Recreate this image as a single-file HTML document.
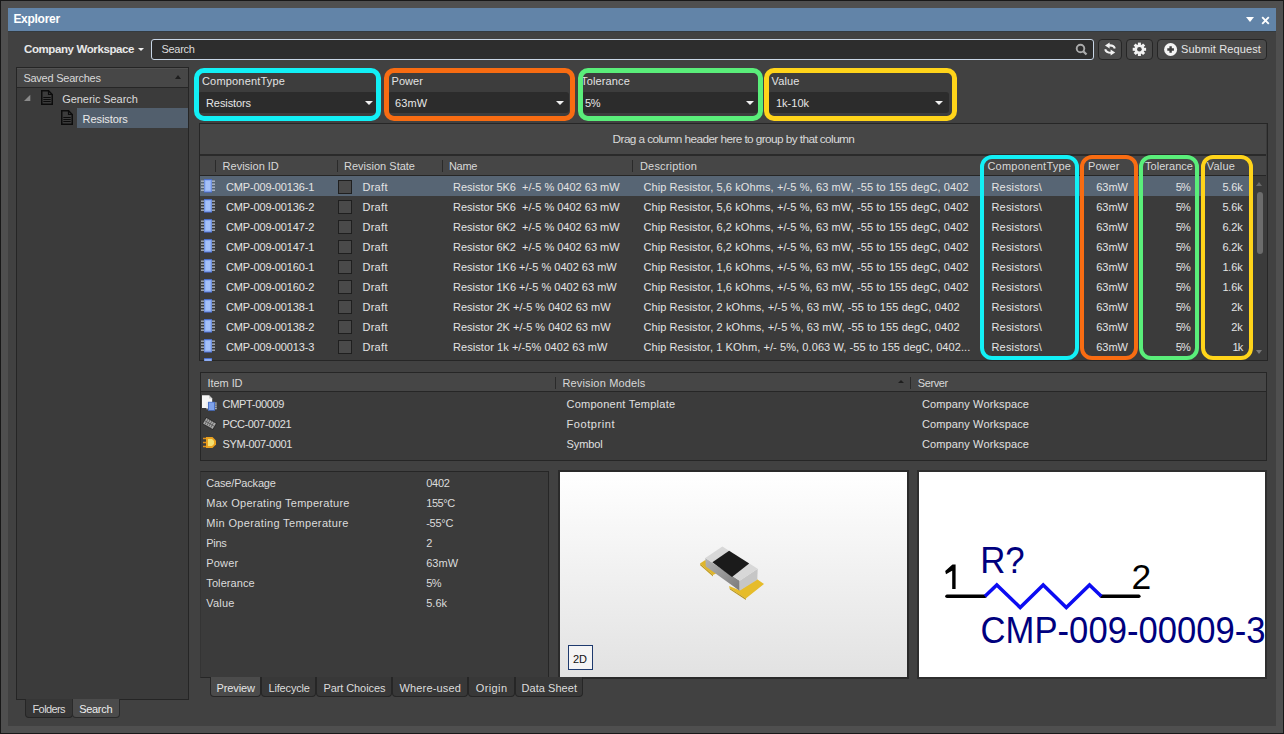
<!DOCTYPE html>
<html><head><meta charset="utf-8">
<style>
*{box-sizing:border-box;margin:0;padding:0}
html,body{width:1284px;height:734px;overflow:hidden;background:#181818}
body{position:relative;font-family:"Liberation Sans",sans-serif;font-size:11px;color:#dedede}
.a{position:absolute}
.t{position:absolute;white-space:pre;line-height:0}
.btn{position:absolute;background:#4a4a4a;border:1.5px solid #262626;border-radius:4px}
.hl{position:absolute;border-radius:10px;border:5px solid}
.dd{position:absolute;background:#2c2c2c;border-radius:3px}
.tri{position:absolute;width:0;height:0;border-left:4px solid transparent;border-right:4px solid transparent;border-top:4px solid #f0f0f0}
svg{position:absolute}
</style></head><body>

<div class="a" style="left:1px;top:1px;width:1282px;height:732px;background:#4f4f4f"></div>
<div class="a" style="left:8px;top:8px;width:1268px;height:718px;background:#414141"></div>
<div class="a" style="left:8px;top:8px;width:1268px;height:23px;background:#6284a8"></div>
<div class="a" style="left:8px;top:31px;width:1268px;height:1px;background:#343b40"></div>
<div class="t" style="top:19.00px;font-size:12px;color:#ffffff;font-weight:bold;letter-spacing:-0.286px;left:13.4px;">Explorer</div>
<div class="a" style="left:1245.5px;top:17px;width:0;height:0;border-left:4px solid transparent;border-right:4px solid transparent;border-top:5px solid #fff"></div>
<svg style="left:1261px;top:16px" width="9" height="9"><path d="M1.2 1.2L7.8 7.8M7.8 1.2L1.2 7.8" stroke="#fff" stroke-width="1.9"/></svg>
<div class="t" style="top:49.00px;font-size:11.5px;color:#e8e8e8;font-weight:bold;letter-spacing:-0.396px;left:24px;">Company Workspace</div>
<div class="a" style="left:137.5px;top:47.5px;width:0;height:0;border-left:3px solid transparent;border-right:3px solid transparent;border-top:3.5px solid #f0f0f0"></div>
<div class="a" style="left:151px;top:39px;width:943px;height:21px;background:#2d2d2d;border:1.3px solid #c8d6e6;border-radius:3px"></div>
<div class="t" style="top:49.00px;font-size:11px;color:#dcdcdc;letter-spacing:-0.259px;left:161.4px;">Search</div>
<svg style="left:1075px;top:43px" width="13" height="13"><circle cx="5.5" cy="5.5" r="3.8" stroke="#ababab" stroke-width="1.9" fill="none"/><path d="M8.3 8.3L11.5 11.5" stroke="#ababab" stroke-width="2.3"/></svg>
<div class="btn" style="left:1098px;top:39px;width:24px;height:21px"></div>
<svg style="left:1103px;top:42px" width="14" height="15"><path d="M2 3.6L6.6 0.6V6.6Z" fill="#f0f0f0"/><path d="M6 3.4C9 3.2 11.2 4.2 11.8 6.6" stroke="#f0f0f0" stroke-width="2.1" fill="none"/><path d="M12.2 10.6L7.6 7.6V13.6Z" fill="#f0f0f0"/><path d="M2.2 7.2C2.8 9.6 5 10.8 8 10.8" stroke="#f0f0f0" stroke-width="2.1" fill="none"/></svg>
<div class="btn" style="left:1126px;top:39px;width:27px;height:21px"></div>
<svg style="left:1132px;top:42px" width="15" height="15" viewBox="0 0 15 15"><g fill="#f2f2f2"><circle cx="7.4" cy="7.3" r="4.9"/><rect x="5.9" y="0.6" width="3" height="3.4" transform="rotate(0 7.4 7.3)"/><rect x="5.9" y="0.6" width="3" height="3.4" transform="rotate(45 7.4 7.3)"/><rect x="5.9" y="0.6" width="3" height="3.4" transform="rotate(90 7.4 7.3)"/><rect x="5.9" y="0.6" width="3" height="3.4" transform="rotate(135 7.4 7.3)"/><rect x="5.9" y="0.6" width="3" height="3.4" transform="rotate(180 7.4 7.3)"/><rect x="5.9" y="0.6" width="3" height="3.4" transform="rotate(225 7.4 7.3)"/><rect x="5.9" y="0.6" width="3" height="3.4" transform="rotate(270 7.4 7.3)"/><rect x="5.9" y="0.6" width="3" height="3.4" transform="rotate(315 7.4 7.3)"/></g><circle cx="7.4" cy="7.3" r="2.3" fill="#4a4a4a"/></svg>
<div class="btn" style="left:1157px;top:39px;width:110px;height:21px"></div>
<svg style="left:1164px;top:43px" width="14" height="14"><circle cx="6.6" cy="6.5" r="6.5" fill="#f4f4f4"/><path d="M6.6 3.2V9.8M3.3 6.5H9.9" stroke="#3e3e3e" stroke-width="2.4"/></svg>
<div class="t" style="top:49.00px;font-size:11px;color:#e6e6e6;letter-spacing:0.124px;left:1181px;">Submit Request</div>
<div class="a" style="left:16px;top:67px;width:173px;height:633px;background:#3b3b3b;border:1px solid #252525"></div>
<div class="a" style="left:17px;top:68px;width:171px;height:20px;background:#474747;border-top:1px solid #525252;border-bottom:1px solid #262626"></div>
<div class="t" style="top:78.00px;font-size:11px;color:#d8d8d8;letter-spacing:-0.244px;left:23.4px;">Saved Searches</div>
<div class="a" style="left:174.5px;top:75px;width:0;height:0;border-left:3.5px solid transparent;border-right:3.5px solid transparent;border-bottom:4px solid #1e1e1e"></div>
<svg style="left:23px;top:94px" width="8" height="8"><path d="M7.3 0.8L7.3 7L1 7Z" fill="#8a8a8a"/></svg>
<svg style="left:41px;top:90px" width="12" height="15"><path d="M0.75 0.75H7.5L11.25 4.5V14.25H0.75Z" fill="none" stroke="#0c0c0c" stroke-width="1.5"/><path d="M7.5 0.75V4.5H11.25" fill="none" stroke="#0c0c0c" stroke-width="1.2"/><path d="M2.3 7.5H9.7M2.3 9.5H9.7M2.3 11.5H9.7" stroke="#0c0c0c" stroke-width="1.1"/></svg>
<div class="t" style="top:99.00px;font-size:11px;color:#dadada;letter-spacing:-0.073px;left:62.3px;">Generic Search</div>
<div class="a" style="left:77px;top:108px;width:111px;height:20px;background:#525f6d"></div>
<svg style="left:61px;top:110px" width="12" height="15"><path d="M0.75 0.75H7.5L11.25 4.5V14.25H0.75Z" fill="none" stroke="#0c0c0c" stroke-width="1.5"/><path d="M7.5 0.75V4.5H11.25" fill="none" stroke="#0c0c0c" stroke-width="1.2"/><path d="M2.3 7.5H9.7M2.3 9.5H9.7M2.3 11.5H9.7" stroke="#0c0c0c" stroke-width="1.1"/></svg>
<div class="t" style="top:119.00px;font-size:11px;color:#eaeaea;letter-spacing:-0.071px;left:82.6px;">Resistors</div>
<div class="a" style="left:25px;top:699px;width:48px;height:19px;background:#363636;border:1px solid #262626;border-top:none;border-radius:0 0 4px 4px"></div>
<div class="a" style="left:72px;top:699px;width:48px;height:19px;background:#4b4b4b;border:1px solid #2a2a2a;border-top:none;border-radius:0 0 4px 4px"></div>
<div class="t" style="top:709.00px;font-size:11px;color:#dcdcdc;letter-spacing:-0.597px;left:32.5px;">Folders</div>
<div class="t" style="top:709.00px;font-size:11px;color:#eeeeee;letter-spacing:-0.309px;left:79.2px;">Search</div>
<div class="a" style="left:198px;top:72px;width:179px;height:45px;background:#3d3d3d"></div>
<div class="dd" style="left:198px;top:92px;width:179px;height:21px"></div>
<div class="t" style="top:81.00px;font-size:11px;color:#e2e2e2;letter-spacing:0.176px;left:202px;">ComponentType</div>
<div class="t" style="top:103.00px;font-size:11px;color:#e6e6e6;letter-spacing:-0.093px;left:206px;">Resistors</div>
<div class="tri" style="left:365px;top:100.5px"></div>
<div class="a" style="left:388px;top:72px;width:183px;height:45px;background:#3d3d3d"></div>
<div class="dd" style="left:388px;top:92px;width:181px;height:21px"></div>
<div class="t" style="top:81.00px;font-size:11px;color:#e2e2e2;letter-spacing:0.064px;left:391.5px;">Power</div>
<div class="t" style="top:103.00px;font-size:11px;color:#e6e6e6;letter-spacing:0.155px;left:395px;">63mW</div>
<div class="tri" style="left:555.5px;top:100.5px"></div>
<div class="a" style="left:582px;top:72px;width:177px;height:45px;background:#3d3d3d"></div>
<div class="dd" style="left:582px;top:92px;width:177px;height:21px"></div>
<div class="t" style="top:81.00px;font-size:11px;color:#e2e2e2;letter-spacing:0.145px;left:581px;">Tolerance</div>
<div class="t" style="top:103.00px;font-size:11px;color:#e6e6e6;letter-spacing:-0.299px;left:585px;">5%</div>
<div class="tri" style="left:745.5px;top:100.5px"></div>
<div class="a" style="left:768px;top:72px;width:185px;height:45px;background:#3d3d3d"></div>
<div class="dd" style="left:768px;top:92px;width:181px;height:21px"></div>
<div class="t" style="top:81.00px;font-size:11px;color:#e2e2e2;letter-spacing:0.137px;left:771.6px;">Value</div>
<div class="t" style="top:103.00px;font-size:11px;color:#e6e6e6;letter-spacing:-0.002px;left:776px;">1k-10k</div>
<div class="tri" style="left:935px;top:100.5px"></div>
<div class="a" style="left:199px;top:123px;width:1069px;height:238px;background:#3b3b3b;border:1px solid #262626"></div>
<div class="a" style="left:200px;top:124px;width:1066px;height:31px;background:#464646;border-bottom:1px solid #2a2a2a"></div>
<div class="t" style="top:139.00px;font-size:11.8px;color:#dadada;letter-spacing:-0.580px;left:612.6px;">Drag a column header here to group by that column</div>
<div class="a" style="left:200px;top:155px;width:1066px;height:21px;background:#464646;border-top:1px solid #2a2a2a;border-bottom:1px solid #262626"></div>
<div class="a" style="left:215px;top:160px;width:1px;height:12px;background:#2a2a2a"></div>
<div class="a" style="left:337px;top:160px;width:1px;height:12px;background:#2a2a2a"></div>
<div class="a" style="left:442px;top:160px;width:1px;height:12px;background:#2a2a2a"></div>
<div class="a" style="left:632px;top:160px;width:1px;height:12px;background:#2a2a2a"></div>
<div class="t" style="top:166.00px;font-size:11px;color:#d8d8d8;letter-spacing:-0.004px;left:222.6px;">Revision ID</div>
<div class="t" style="top:166.00px;font-size:11px;color:#d8d8d8;letter-spacing:0.005px;left:344px;">Revision State</div>
<div class="t" style="top:166.00px;font-size:11px;color:#d8d8d8;letter-spacing:-0.335px;left:449px;">Name</div>
<div class="t" style="top:166.00px;font-size:11px;color:#d8d8d8;letter-spacing:0.180px;left:640px;">Description</div>
<div class="t" style="top:166.00px;font-size:11px;color:#d8d8d8;letter-spacing:0.237px;left:987.4px;">ComponentType</div>
<div class="t" style="top:166.00px;font-size:11px;color:#d8d8d8;letter-spacing:0.064px;left:1088px;">Power</div>
<div class="t" style="top:166.00px;font-size:11px;color:#d8d8d8;letter-spacing:0.034px;left:1145px;">Tolerance</div>
<div class="t" style="top:166.00px;font-size:11px;color:#d8d8d8;letter-spacing:0.237px;left:1206.7px;">Value</div>
<div class="a" style="left:200px;top:176px;width:1053px;height:185px;overflow:hidden">
<div class="a" style="left:0px;top:0px;width:1053px;height:20px;background:#576574"></div>
</div>
<svg style="left:201px;top:179.4px" width="14" height="14"><rect x="0" y="1.6" width="3" height="1.1" fill="#c4cede"/><rect x="11" y="1.6" width="3" height="1.1" fill="#c4cede"/><rect x="0" y="4.6" width="3" height="1.1" fill="#c4cede"/><rect x="11" y="4.6" width="3" height="1.1" fill="#c4cede"/><rect x="0" y="7.6" width="3" height="1.1" fill="#c4cede"/><rect x="11" y="7.6" width="3" height="1.1" fill="#c4cede"/><rect x="0" y="10.6" width="3" height="1.1" fill="#c4cede"/><rect x="11" y="10.6" width="3" height="1.1" fill="#c4cede"/><rect x="3" y="0" width="8" height="13.6" fill="#4668c8"/><rect x="3.4" y="0.9" width="7.2" height="11.8" fill="#8cacf2"/><rect x="4.6" y="2" width="4.5" height="9.5" fill="#a4c0f8"/></svg>
<div class="t" style="top:187.00px;font-size:11px;color:#e4e4e4;letter-spacing:-0.159px;left:226px;">CMP-009-00136-1</div>
<div class="a" style="left:338px;top:180px;width:14px;height:14px;background:#4a4a4a;border:1px solid #1f1f1f"></div>
<div class="t" style="top:187.00px;font-size:11px;color:#e4e4e4;letter-spacing:0.313px;left:362.4px;">Draft</div>
<div class="t" style="top:187.00px;font-size:11px;color:#e4e4e4;letter-spacing:0.000px;left:453px;">Resistor 5K6  +/-5 % 0402 63 mW</div>
<div class="t" style="top:187.00px;font-size:11px;color:#e4e4e4;letter-spacing:0.103px;left:643.4px;">Chip Resistor, 5,6 kOhms, +/-5 %, 63 mW, -55 to 155 degC, 0402</div>
<div class="t" style="top:187.00px;font-size:11px;color:#e4e4e4;letter-spacing:0.160px;left:991.5px;">Resistors\</div>
<div class="t" style="top:187.00px;font-size:11px;color:#e4e4e4;letter-spacing:-0.070px;left:1096.30px;">63mW</div>
<div class="t" style="top:187.00px;font-size:11px;color:#e4e4e4;letter-spacing:-0.749px;left:1175.70px;">5%</div>
<div class="t" style="top:187.00px;font-size:11px;color:#e4e4e4;letter-spacing:-0.148px;left:1222.40px;">5.6k</div>
<svg style="left:201px;top:199.4px" width="14" height="14"><rect x="0" y="1.6" width="3" height="1.1" fill="#c4cede"/><rect x="11" y="1.6" width="3" height="1.1" fill="#c4cede"/><rect x="0" y="4.6" width="3" height="1.1" fill="#c4cede"/><rect x="11" y="4.6" width="3" height="1.1" fill="#c4cede"/><rect x="0" y="7.6" width="3" height="1.1" fill="#c4cede"/><rect x="11" y="7.6" width="3" height="1.1" fill="#c4cede"/><rect x="0" y="10.6" width="3" height="1.1" fill="#c4cede"/><rect x="11" y="10.6" width="3" height="1.1" fill="#c4cede"/><rect x="3" y="0" width="8" height="13.6" fill="#4668c8"/><rect x="3.4" y="0.9" width="7.2" height="11.8" fill="#8cacf2"/><rect x="4.6" y="2" width="4.5" height="9.5" fill="#a4c0f8"/></svg>
<div class="t" style="top:207.00px;font-size:11px;color:#e4e4e4;letter-spacing:-0.159px;left:226px;">CMP-009-00136-2</div>
<div class="a" style="left:338px;top:200px;width:14px;height:14px;background:#4a4a4a;border:1px solid #1f1f1f"></div>
<div class="t" style="top:207.00px;font-size:11px;color:#e4e4e4;letter-spacing:0.313px;left:362.4px;">Draft</div>
<div class="t" style="top:207.00px;font-size:11px;color:#e4e4e4;letter-spacing:0.000px;left:453px;">Resistor 5K6  +/-5 % 0402 63 mW</div>
<div class="t" style="top:207.00px;font-size:11px;color:#e4e4e4;letter-spacing:0.103px;left:643.4px;">Chip Resistor, 5,6 kOhms, +/-5 %, 63 mW, -55 to 155 degC, 0402</div>
<div class="t" style="top:207.00px;font-size:11px;color:#e4e4e4;letter-spacing:0.160px;left:991.5px;">Resistors\</div>
<div class="t" style="top:207.00px;font-size:11px;color:#e4e4e4;letter-spacing:-0.070px;left:1096.30px;">63mW</div>
<div class="t" style="top:207.00px;font-size:11px;color:#e4e4e4;letter-spacing:-0.749px;left:1175.70px;">5%</div>
<div class="t" style="top:207.00px;font-size:11px;color:#e4e4e4;letter-spacing:-0.148px;left:1222.40px;">5.6k</div>
<svg style="left:201px;top:219.4px" width="14" height="14"><rect x="0" y="1.6" width="3" height="1.1" fill="#c4cede"/><rect x="11" y="1.6" width="3" height="1.1" fill="#c4cede"/><rect x="0" y="4.6" width="3" height="1.1" fill="#c4cede"/><rect x="11" y="4.6" width="3" height="1.1" fill="#c4cede"/><rect x="0" y="7.6" width="3" height="1.1" fill="#c4cede"/><rect x="11" y="7.6" width="3" height="1.1" fill="#c4cede"/><rect x="0" y="10.6" width="3" height="1.1" fill="#c4cede"/><rect x="11" y="10.6" width="3" height="1.1" fill="#c4cede"/><rect x="3" y="0" width="8" height="13.6" fill="#4668c8"/><rect x="3.4" y="0.9" width="7.2" height="11.8" fill="#8cacf2"/><rect x="4.6" y="2" width="4.5" height="9.5" fill="#a4c0f8"/></svg>
<div class="t" style="top:227.00px;font-size:11px;color:#e4e4e4;letter-spacing:-0.159px;left:226px;">CMP-009-00147-2</div>
<div class="a" style="left:338px;top:220px;width:14px;height:14px;background:#4a4a4a;border:1px solid #1f1f1f"></div>
<div class="t" style="top:227.00px;font-size:11px;color:#e4e4e4;letter-spacing:0.313px;left:362.4px;">Draft</div>
<div class="t" style="top:227.00px;font-size:11px;color:#e4e4e4;letter-spacing:0.000px;left:453px;">Resistor 6K2  +/-5 % 0402 63 mW</div>
<div class="t" style="top:227.00px;font-size:11px;color:#e4e4e4;letter-spacing:0.103px;left:643.4px;">Chip Resistor, 6,2 kOhms, +/-5 %, 63 mW, -55 to 155 degC, 0402</div>
<div class="t" style="top:227.00px;font-size:11px;color:#e4e4e4;letter-spacing:0.160px;left:991.5px;">Resistors\</div>
<div class="t" style="top:227.00px;font-size:11px;color:#e4e4e4;letter-spacing:-0.070px;left:1096.30px;">63mW</div>
<div class="t" style="top:227.00px;font-size:11px;color:#e4e4e4;letter-spacing:-0.749px;left:1175.70px;">5%</div>
<div class="t" style="top:227.00px;font-size:11px;color:#e4e4e4;letter-spacing:-0.148px;left:1222.40px;">6.2k</div>
<svg style="left:201px;top:239.4px" width="14" height="14"><rect x="0" y="1.6" width="3" height="1.1" fill="#c4cede"/><rect x="11" y="1.6" width="3" height="1.1" fill="#c4cede"/><rect x="0" y="4.6" width="3" height="1.1" fill="#c4cede"/><rect x="11" y="4.6" width="3" height="1.1" fill="#c4cede"/><rect x="0" y="7.6" width="3" height="1.1" fill="#c4cede"/><rect x="11" y="7.6" width="3" height="1.1" fill="#c4cede"/><rect x="0" y="10.6" width="3" height="1.1" fill="#c4cede"/><rect x="11" y="10.6" width="3" height="1.1" fill="#c4cede"/><rect x="3" y="0" width="8" height="13.6" fill="#4668c8"/><rect x="3.4" y="0.9" width="7.2" height="11.8" fill="#8cacf2"/><rect x="4.6" y="2" width="4.5" height="9.5" fill="#a4c0f8"/></svg>
<div class="t" style="top:247.00px;font-size:11px;color:#e4e4e4;letter-spacing:-0.159px;left:226px;">CMP-009-00147-1</div>
<div class="a" style="left:338px;top:240px;width:14px;height:14px;background:#4a4a4a;border:1px solid #1f1f1f"></div>
<div class="t" style="top:247.00px;font-size:11px;color:#e4e4e4;letter-spacing:0.313px;left:362.4px;">Draft</div>
<div class="t" style="top:247.00px;font-size:11px;color:#e4e4e4;letter-spacing:0.000px;left:453px;">Resistor 6K2  +/-5 % 0402 63 mW</div>
<div class="t" style="top:247.00px;font-size:11px;color:#e4e4e4;letter-spacing:0.103px;left:643.4px;">Chip Resistor, 6,2 kOhms, +/-5 %, 63 mW, -55 to 155 degC, 0402</div>
<div class="t" style="top:247.00px;font-size:11px;color:#e4e4e4;letter-spacing:0.160px;left:991.5px;">Resistors\</div>
<div class="t" style="top:247.00px;font-size:11px;color:#e4e4e4;letter-spacing:-0.070px;left:1096.30px;">63mW</div>
<div class="t" style="top:247.00px;font-size:11px;color:#e4e4e4;letter-spacing:-0.749px;left:1175.70px;">5%</div>
<div class="t" style="top:247.00px;font-size:11px;color:#e4e4e4;letter-spacing:-0.148px;left:1222.40px;">6.2k</div>
<svg style="left:201px;top:259.4px" width="14" height="14"><rect x="0" y="1.6" width="3" height="1.1" fill="#c4cede"/><rect x="11" y="1.6" width="3" height="1.1" fill="#c4cede"/><rect x="0" y="4.6" width="3" height="1.1" fill="#c4cede"/><rect x="11" y="4.6" width="3" height="1.1" fill="#c4cede"/><rect x="0" y="7.6" width="3" height="1.1" fill="#c4cede"/><rect x="11" y="7.6" width="3" height="1.1" fill="#c4cede"/><rect x="0" y="10.6" width="3" height="1.1" fill="#c4cede"/><rect x="11" y="10.6" width="3" height="1.1" fill="#c4cede"/><rect x="3" y="0" width="8" height="13.6" fill="#4668c8"/><rect x="3.4" y="0.9" width="7.2" height="11.8" fill="#8cacf2"/><rect x="4.6" y="2" width="4.5" height="9.5" fill="#a4c0f8"/></svg>
<div class="t" style="top:267.00px;font-size:11px;color:#e4e4e4;letter-spacing:-0.159px;left:226px;">CMP-009-00160-1</div>
<div class="a" style="left:338px;top:260px;width:14px;height:14px;background:#4a4a4a;border:1px solid #1f1f1f"></div>
<div class="t" style="top:267.00px;font-size:11px;color:#e4e4e4;letter-spacing:0.313px;left:362.4px;">Draft</div>
<div class="t" style="top:267.00px;font-size:11px;color:#e4e4e4;letter-spacing:0.005px;left:453px;">Resistor 1K6 +/-5 % 0402 63 mW</div>
<div class="t" style="top:267.00px;font-size:11px;color:#e4e4e4;letter-spacing:0.103px;left:643.4px;">Chip Resistor, 1,6 kOhms, +/-5 %, 63 mW, -55 to 155 degC, 0402</div>
<div class="t" style="top:267.00px;font-size:11px;color:#e4e4e4;letter-spacing:0.160px;left:991.5px;">Resistors\</div>
<div class="t" style="top:267.00px;font-size:11px;color:#e4e4e4;letter-spacing:-0.070px;left:1096.30px;">63mW</div>
<div class="t" style="top:267.00px;font-size:11px;color:#e4e4e4;letter-spacing:-0.749px;left:1175.70px;">5%</div>
<div class="t" style="top:267.00px;font-size:11px;color:#e4e4e4;letter-spacing:-0.148px;left:1222.40px;">1.6k</div>
<svg style="left:201px;top:279.4px" width="14" height="14"><rect x="0" y="1.6" width="3" height="1.1" fill="#c4cede"/><rect x="11" y="1.6" width="3" height="1.1" fill="#c4cede"/><rect x="0" y="4.6" width="3" height="1.1" fill="#c4cede"/><rect x="11" y="4.6" width="3" height="1.1" fill="#c4cede"/><rect x="0" y="7.6" width="3" height="1.1" fill="#c4cede"/><rect x="11" y="7.6" width="3" height="1.1" fill="#c4cede"/><rect x="0" y="10.6" width="3" height="1.1" fill="#c4cede"/><rect x="11" y="10.6" width="3" height="1.1" fill="#c4cede"/><rect x="3" y="0" width="8" height="13.6" fill="#4668c8"/><rect x="3.4" y="0.9" width="7.2" height="11.8" fill="#8cacf2"/><rect x="4.6" y="2" width="4.5" height="9.5" fill="#a4c0f8"/></svg>
<div class="t" style="top:287.00px;font-size:11px;color:#e4e4e4;letter-spacing:-0.159px;left:226px;">CMP-009-00160-2</div>
<div class="a" style="left:338px;top:280px;width:14px;height:14px;background:#4a4a4a;border:1px solid #1f1f1f"></div>
<div class="t" style="top:287.00px;font-size:11px;color:#e4e4e4;letter-spacing:0.313px;left:362.4px;">Draft</div>
<div class="t" style="top:287.00px;font-size:11px;color:#e4e4e4;letter-spacing:0.005px;left:453px;">Resistor 1K6 +/-5 % 0402 63 mW</div>
<div class="t" style="top:287.00px;font-size:11px;color:#e4e4e4;letter-spacing:0.103px;left:643.4px;">Chip Resistor, 1,6 kOhms, +/-5 %, 63 mW, -55 to 155 degC, 0402</div>
<div class="t" style="top:287.00px;font-size:11px;color:#e4e4e4;letter-spacing:0.160px;left:991.5px;">Resistors\</div>
<div class="t" style="top:287.00px;font-size:11px;color:#e4e4e4;letter-spacing:-0.070px;left:1096.30px;">63mW</div>
<div class="t" style="top:287.00px;font-size:11px;color:#e4e4e4;letter-spacing:-0.749px;left:1175.70px;">5%</div>
<div class="t" style="top:287.00px;font-size:11px;color:#e4e4e4;letter-spacing:-0.148px;left:1222.40px;">1.6k</div>
<svg style="left:201px;top:299.4px" width="14" height="14"><rect x="0" y="1.6" width="3" height="1.1" fill="#c4cede"/><rect x="11" y="1.6" width="3" height="1.1" fill="#c4cede"/><rect x="0" y="4.6" width="3" height="1.1" fill="#c4cede"/><rect x="11" y="4.6" width="3" height="1.1" fill="#c4cede"/><rect x="0" y="7.6" width="3" height="1.1" fill="#c4cede"/><rect x="11" y="7.6" width="3" height="1.1" fill="#c4cede"/><rect x="0" y="10.6" width="3" height="1.1" fill="#c4cede"/><rect x="11" y="10.6" width="3" height="1.1" fill="#c4cede"/><rect x="3" y="0" width="8" height="13.6" fill="#4668c8"/><rect x="3.4" y="0.9" width="7.2" height="11.8" fill="#8cacf2"/><rect x="4.6" y="2" width="4.5" height="9.5" fill="#a4c0f8"/></svg>
<div class="t" style="top:307.00px;font-size:11px;color:#e4e4e4;letter-spacing:-0.159px;left:226px;">CMP-009-00138-1</div>
<div class="a" style="left:338px;top:300px;width:14px;height:14px;background:#4a4a4a;border:1px solid #1f1f1f"></div>
<div class="t" style="top:307.00px;font-size:11px;color:#e4e4e4;letter-spacing:0.313px;left:362.4px;">Draft</div>
<div class="t" style="top:307.00px;font-size:11px;color:#e4e4e4;letter-spacing:0.006px;left:453px;">Resistor 2K +/-5 % 0402 63 mW</div>
<div class="t" style="top:307.00px;font-size:11px;color:#e4e4e4;letter-spacing:0.109px;left:643.4px;">Chip Resistor, 2 kOhms, +/-5 %, 63 mW, -55 to 155 degC, 0402</div>
<div class="t" style="top:307.00px;font-size:11px;color:#e4e4e4;letter-spacing:0.160px;left:991.5px;">Resistors\</div>
<div class="t" style="top:307.00px;font-size:11px;color:#e4e4e4;letter-spacing:-0.070px;left:1096.30px;">63mW</div>
<div class="t" style="top:307.00px;font-size:11px;color:#e4e4e4;letter-spacing:-0.749px;left:1175.70px;">5%</div>
<div class="t" style="top:307.00px;font-size:11px;color:#e4e4e4;letter-spacing:-0.109px;left:1231.20px;">2k</div>
<svg style="left:201px;top:319.4px" width="14" height="14"><rect x="0" y="1.6" width="3" height="1.1" fill="#c4cede"/><rect x="11" y="1.6" width="3" height="1.1" fill="#c4cede"/><rect x="0" y="4.6" width="3" height="1.1" fill="#c4cede"/><rect x="11" y="4.6" width="3" height="1.1" fill="#c4cede"/><rect x="0" y="7.6" width="3" height="1.1" fill="#c4cede"/><rect x="11" y="7.6" width="3" height="1.1" fill="#c4cede"/><rect x="0" y="10.6" width="3" height="1.1" fill="#c4cede"/><rect x="11" y="10.6" width="3" height="1.1" fill="#c4cede"/><rect x="3" y="0" width="8" height="13.6" fill="#4668c8"/><rect x="3.4" y="0.9" width="7.2" height="11.8" fill="#8cacf2"/><rect x="4.6" y="2" width="4.5" height="9.5" fill="#a4c0f8"/></svg>
<div class="t" style="top:327.00px;font-size:11px;color:#e4e4e4;letter-spacing:-0.159px;left:226px;">CMP-009-00138-2</div>
<div class="a" style="left:338px;top:320px;width:14px;height:14px;background:#4a4a4a;border:1px solid #1f1f1f"></div>
<div class="t" style="top:327.00px;font-size:11px;color:#e4e4e4;letter-spacing:0.313px;left:362.4px;">Draft</div>
<div class="t" style="top:327.00px;font-size:11px;color:#e4e4e4;letter-spacing:0.006px;left:453px;">Resistor 2K +/-5 % 0402 63 mW</div>
<div class="t" style="top:327.00px;font-size:11px;color:#e4e4e4;letter-spacing:0.109px;left:643.4px;">Chip Resistor, 2 kOhms, +/-5 %, 63 mW, -55 to 155 degC, 0402</div>
<div class="t" style="top:327.00px;font-size:11px;color:#e4e4e4;letter-spacing:0.160px;left:991.5px;">Resistors\</div>
<div class="t" style="top:327.00px;font-size:11px;color:#e4e4e4;letter-spacing:-0.070px;left:1096.30px;">63mW</div>
<div class="t" style="top:327.00px;font-size:11px;color:#e4e4e4;letter-spacing:-0.749px;left:1175.70px;">5%</div>
<div class="t" style="top:327.00px;font-size:11px;color:#e4e4e4;letter-spacing:-0.109px;left:1231.20px;">2k</div>
<svg style="left:201px;top:339.4px" width="14" height="14"><rect x="0" y="1.6" width="3" height="1.1" fill="#c4cede"/><rect x="11" y="1.6" width="3" height="1.1" fill="#c4cede"/><rect x="0" y="4.6" width="3" height="1.1" fill="#c4cede"/><rect x="11" y="4.6" width="3" height="1.1" fill="#c4cede"/><rect x="0" y="7.6" width="3" height="1.1" fill="#c4cede"/><rect x="11" y="7.6" width="3" height="1.1" fill="#c4cede"/><rect x="0" y="10.6" width="3" height="1.1" fill="#c4cede"/><rect x="11" y="10.6" width="3" height="1.1" fill="#c4cede"/><rect x="3" y="0" width="8" height="13.6" fill="#4668c8"/><rect x="3.4" y="0.9" width="7.2" height="11.8" fill="#8cacf2"/><rect x="4.6" y="2" width="4.5" height="9.5" fill="#a4c0f8"/></svg>
<div class="t" style="top:347.00px;font-size:11px;color:#e4e4e4;letter-spacing:-0.159px;left:226px;">CMP-009-00013-3</div>
<div class="a" style="left:338px;top:340px;width:14px;height:14px;background:#4a4a4a;border:1px solid #1f1f1f"></div>
<div class="t" style="top:347.00px;font-size:11px;color:#e4e4e4;letter-spacing:0.313px;left:362.4px;">Draft</div>
<div class="t" style="top:347.00px;font-size:11px;color:#e4e4e4;letter-spacing:0.067px;left:453px;">Resistor 1k +/-5% 0402 63 mW</div>
<div class="t" style="top:347.00px;font-size:11px;color:#e4e4e4;letter-spacing:0.089px;left:643.4px;">Chip Resistor, 1 KOhm, +/- 5%, 0.063 W, -55 to 155 degC, 0402...</div>
<div class="t" style="top:347.00px;font-size:11px;color:#e4e4e4;letter-spacing:0.160px;left:991.5px;">Resistors\</div>
<div class="t" style="top:347.00px;font-size:11px;color:#e4e4e4;letter-spacing:-0.070px;left:1096.30px;">63mW</div>
<div class="t" style="top:347.00px;font-size:11px;color:#e4e4e4;letter-spacing:-0.749px;left:1175.70px;">5%</div>
<div class="t" style="top:347.00px;font-size:11px;color:#e4e4e4;letter-spacing:-0.759px;left:1232.50px;">1k</div>
<div class="a" style="left:200px;top:356px;width:60px;height:5px;overflow:hidden">
<svg style="left:1px;top:2px" width="14" height="14"><rect x="3" y="0" width="8" height="13" fill="#4668c8"/><rect x="3.4" y="0.9" width="7.2" height="11" fill="#8cacf2"/></svg>
</div>
<div class="a" style="left:1256.3px;top:182px;width:0;height:0;border-left:3.6px solid transparent;border-right:3.6px solid transparent;border-bottom:4px solid #6a6a6a"></div>
<div class="a" style="left:1256.8px;top:192px;width:6.5px;height:61.5px;background:#6c6c6c;border-radius:3.2px"></div>
<div class="a" style="left:1256px;top:350px;width:0;height:0;border-left:3.6px solid transparent;border-right:3.6px solid transparent;border-top:4px solid #7a7a7a"></div>
<div class="a" style="left:200px;top:372px;width:1067px;height:89px;background:#3b3b3b;border:1px solid #262626"></div>
<div class="a" style="left:201px;top:373px;width:1065px;height:19px;background:#464646;border-bottom:1px solid #262626"></div>
<div class="a" style="left:555px;top:377px;width:1px;height:12px;background:#2a2a2a"></div>
<div class="a" style="left:910px;top:377px;width:1px;height:12px;background:#2a2a2a"></div>
<div class="t" style="top:383.00px;font-size:11px;color:#d8d8d8;letter-spacing:-0.064px;left:207.5px;">Item ID</div>
<div class="t" style="top:383.00px;font-size:11px;color:#d8d8d8;letter-spacing:0.154px;left:562.5px;">Revision Models</div>
<div class="t" style="top:383.00px;font-size:11px;color:#d8d8d8;letter-spacing:-0.399px;left:917.8px;">Server</div>
<div class="a" style="left:897.5px;top:380.3px;width:0;height:0;border-left:3.5px solid transparent;border-right:3.5px solid transparent;border-bottom:3.8px solid #1e1e1e"></div>
<div class="t" style="top:404.00px;font-size:11px;color:#e0e0e0;letter-spacing:-0.330px;left:222.6px;">CMPT-00009</div>
<div class="t" style="top:404.00px;font-size:11px;color:#e0e0e0;letter-spacing:0.247px;left:566.5px;">Component Template</div>
<div class="t" style="top:404.00px;font-size:11px;color:#e0e0e0;letter-spacing:0.121px;left:922px;">Company Workspace</div>
<div class="t" style="top:424.00px;font-size:11px;color:#e0e0e0;letter-spacing:-0.406px;left:222.6px;">PCC-007-0021</div>
<div class="t" style="top:424.00px;font-size:11px;color:#e0e0e0;letter-spacing:0.566px;left:566.5px;">Footprint</div>
<div class="t" style="top:424.00px;font-size:11px;color:#e0e0e0;letter-spacing:0.121px;left:922px;">Company Workspace</div>
<div class="t" style="top:444.00px;font-size:11px;color:#e0e0e0;letter-spacing:-0.390px;left:222.6px;">SYM-007-0001</div>
<div class="t" style="top:444.00px;font-size:11px;color:#e0e0e0;letter-spacing:-0.080px;left:566.5px;">Symbol</div>
<div class="t" style="top:444.00px;font-size:11px;color:#e0e0e0;letter-spacing:0.121px;left:922px;">Company Workspace</div>
<svg style="left:201px;top:395px" width="18" height="18"><path d="M1 0.3H8L11.2 3.5V13H1Z" fill="#f6f6f6"/><path d="M8 0.3V3.5H11.2" fill="#cfcfcf"/><rect x="5.3" y="7.6" width="2" height="0.9" fill="#d8e0ee"/><rect x="13.8" y="7.6" width="2" height="0.9" fill="#d8e0ee"/><rect x="5.3" y="9.5" width="2" height="0.9" fill="#d8e0ee"/><rect x="13.8" y="9.5" width="2" height="0.9" fill="#d8e0ee"/><rect x="5.3" y="11.399999999999999" width="2" height="0.9" fill="#d8e0ee"/><rect x="13.8" y="11.399999999999999" width="2" height="0.9" fill="#d8e0ee"/><rect x="5.3" y="13.299999999999999" width="2" height="0.9" fill="#d8e0ee"/><rect x="13.8" y="13.299999999999999" width="2" height="0.9" fill="#d8e0ee"/><rect x="7" y="6.8" width="7" height="9" fill="#4a72c8"/><rect x="8" y="7.6" width="5" height="7.4" fill="#7fa2ea"/></svg>
<svg style="left:202px;top:416px" width="15" height="15"><g transform="rotate(30 7.5 7.5)"><rect x="1.2" y="3.5" width="12.6" height="8" fill="#2a2a2a"/><rect x="2" y="4.2" width="11" height="6.6" fill="#a8a8a8"/><path d="M4 4.2V10.8M6.2 4.2V10.8M8.4 4.2V10.8M10.6 4.2V10.8M2 7.5H13" stroke="#5a5a5a" stroke-width="0.8"/></g></svg>
<svg style="left:202px;top:436px" width="15" height="13"><path d="M1 2.5H4M1 6.5H4M1 10.5H4" stroke="#e09018" stroke-width="1.6"/><path d="M4 1H10.5L14 4.5V8.5L10.5 12H4Z" fill="#e8a020"/><path d="M6 3H10L12 5V8L10 10H6Z" fill="#f4e070"/></svg>
<div class="a" style="left:200px;top:471px;width:349px;height:207px;background:#3b3b3b;border:1px solid #262626;border-left-color:#343434"></div>
<div class="t" style="top:483.00px;font-size:11px;color:#dcdcdc;letter-spacing:-0.178px;left:206.3px;">Case/Package</div>
<div class="t" style="top:483.00px;font-size:11px;color:#dcdcdc;letter-spacing:-0.267px;left:426.2px;">0402</div>
<div class="t" style="top:503.00px;font-size:11px;color:#dcdcdc;letter-spacing:0.266px;left:206.3px;">Max Operating Temperature</div>
<div class="t" style="top:503.00px;font-size:11px;color:#dcdcdc;letter-spacing:-0.399px;left:426.2px;">155°C</div>
<div class="t" style="top:523.00px;font-size:11px;color:#dcdcdc;letter-spacing:0.348px;left:206.3px;">Min Operating Temperature</div>
<div class="t" style="top:523.00px;font-size:11px;color:#dcdcdc;letter-spacing:-0.268px;left:426.2px;">-55°C</div>
<div class="t" style="top:543.00px;font-size:11px;color:#dcdcdc;letter-spacing:-0.300px;left:206.3px;">Pins</div>
<div class="t" style="top:543.00px;font-size:11px;color:#dcdcdc;left:426.2px;">2</div>
<div class="t" style="top:563.00px;font-size:11px;color:#dcdcdc;letter-spacing:0.144px;left:206.3px;">Power</div>
<div class="t" style="top:563.00px;font-size:11px;color:#dcdcdc;letter-spacing:0.030px;left:426.2px;">63mW</div>
<div class="t" style="top:583.00px;font-size:11px;color:#dcdcdc;letter-spacing:0.090px;left:206.3px;">Tolerance</div>
<div class="t" style="top:583.00px;font-size:11px;color:#dcdcdc;letter-spacing:-0.499px;left:426.2px;">5%</div>
<div class="t" style="top:603.00px;font-size:11px;color:#dcdcdc;letter-spacing:0.197px;left:206.3px;">Value</div>
<div class="t" style="top:603.00px;font-size:11px;color:#dcdcdc;letter-spacing:0.027px;left:426.2px;">5.6k</div>
<div class="a" style="left:558px;top:470px;width:351px;height:209px;background:#2a2a2a"></div>
<div class="a" style="left:560px;top:472px;width:347px;height:205px;background:linear-gradient(#ffffff,#e2e2e2)"></div>
<div class="a" style="left:568px;top:645px;width:25px;height:25px;background:#f4f4f4;border:1px solid #1e3a6e"></div>
<div class="t" style="top:659.00px;font-size:11px;color:#111;letter-spacing:-0.030px;left:573px;">2D</div>
<svg style="left:690px;top:535px" width="85" height="70" viewBox="0 0 85 70">
<defs><linearGradient id="lf" x1="0" y1="0" x2="1" y2="1"><stop offset="0" stop-color="#b4b4b4"/><stop offset="1" stop-color="#7a7a7a"/></linearGradient></defs>
<path d="M10 28.6L15.3 25L28 37.5L23 40Z" fill="#e0b62a"/>
<path d="M10 28.6L23 40L23 41.5L10.5 30.5Z" fill="#c09a18"/>
<path d="M39.1 51L49.6 55.3L66.8 44.1L74 48.9L55.8 63.5L39.5 53Z" fill="#e6bc2a"/>
<path d="M39.5 53L55.8 63.5L56 65L40 54.5Z" fill="#b89418"/>
<path d="M15.3 22.9L49.6 45.8L49.6 55.8L15.8 31.5Z" fill="url(#lf)"/>
<path d="M49.6 45.8L67.7 33.8L67.3 44.8L49.6 55.8Z" fill="#c6c6c6"/>
<path d="M15.3 22.9L32.4 11.5L67.7 33.8L49.6 45.8Z" fill="#d8d8d8"/>
<path d="M22.4 27.2L39.1 15.7L59.2 28.6L42 42Z" fill="#1b1b1b"/>
</svg>
<div class="a" style="left:917px;top:470px;width:350px;height:209px;background:#2e2e2e"></div>
<div class="a" style="left:919px;top:472px;width:346px;height:205px;background:#ffffff"></div>
<svg style="left:919px;top:472px" width="347" height="205">
<path d="M28 124.2H66" stroke="#000" stroke-width="3.6" stroke-linecap="round"/>
<path d="M182.3 124.2H219.8" stroke="#000" stroke-width="3.6" stroke-linecap="round"/>
<path d="M66 124.2L77.8 113L101.2 135.5L124.2 113L147.3 135.5L170.5 113L182.3 124.2" stroke="#0c0cf2" stroke-width="3.5" fill="none" stroke-linejoin="miter"/>
<path d="M33.2 92.5H36.6V117H33.2Z M33.4 92.5L36.6 93L36.1 97L27 102.2L26.2 98.9Z" fill="#000"/>
<text x="212.6" y="116.7" font-family="Liberation Sans" font-size="35.5" fill="#000">2</text>
<text x="61.2" y="101.2" font-family="Liberation Sans" font-size="36" fill="#00007e" textLength="44.5" lengthAdjust="spacingAndGlyphs">R?</text>
<text x="61.6" y="170.9" font-family="Liberation Sans" font-size="36" fill="#00007e" textLength="285" lengthAdjust="spacingAndGlyphs">CMP-009-00009-3</text>
</svg>
<div class="a" style="left:210px;top:677px;width:51px;height:20px;background:#4b4b4b;border:1px solid #262626;border-top:none;border-radius:0 0 4px 4px"></div>
<div class="t" style="top:688.00px;font-size:11px;color:#e6e6e6;letter-spacing:-0.089px;left:216.4px;">Preview</div>
<div class="a" style="left:261px;top:677px;width:55px;height:20px;background:#383838;border:1px solid #262626;border-top:none;border-radius:0 0 4px 4px"></div>
<div class="t" style="top:688.00px;font-size:11px;color:#dcdcdc;letter-spacing:-0.166px;left:268.5px;">Lifecycle</div>
<div class="a" style="left:316px;top:677px;width:76px;height:20px;background:#383838;border:1px solid #262626;border-top:none;border-radius:0 0 4px 4px"></div>
<div class="t" style="top:688.00px;font-size:11px;color:#dcdcdc;letter-spacing:-0.097px;left:323.5px;">Part Choices</div>
<div class="a" style="left:392px;top:677px;width:76px;height:20px;background:#383838;border:1px solid #262626;border-top:none;border-radius:0 0 4px 4px"></div>
<div class="t" style="top:688.00px;font-size:11px;color:#dcdcdc;letter-spacing:0.179px;left:399.4px;">Where-used</div>
<div class="a" style="left:468px;top:677px;width:47px;height:20px;background:#383838;border:1px solid #262626;border-top:none;border-radius:0 0 4px 4px"></div>
<div class="t" style="top:688.00px;font-size:11px;color:#dcdcdc;letter-spacing:0.410px;left:475.7px;">Origin</div>
<div class="a" style="left:515px;top:677px;width:68px;height:20px;background:#383838;border:1px solid #262626;border-top:none;border-radius:0 0 4px 4px"></div>
<div class="t" style="top:688.00px;font-size:11px;color:#dcdcdc;letter-spacing:0.046px;left:521.5px;">Data Sheet</div>
<div class="hl" style="left:194px;top:68px;width:187px;height:53px;border-color:#12f0f6"></div>
<div class="hl" style="left:384px;top:68px;width:191px;height:53px;border-color:#f86c12"></div>
<div class="hl" style="left:578px;top:68px;width:185px;height:53px;border-color:#5aee7a"></div>
<div class="hl" style="left:764px;top:68px;width:193px;height:53px;border-color:#ffd41a"></div>
<div class="hl" style="left:980px;top:155px;width:99px;height:205px;border-color:#12f0f6;border-width:4.5px;border-radius:12px"></div>
<div class="hl" style="left:1080px;top:155px;width:58px;height:205px;border-color:#f86c12;border-width:4.5px;border-radius:12px"></div>
<div class="hl" style="left:1139px;top:155px;width:60px;height:205px;border-color:#5aee7a;border-width:4.5px;border-radius:12px"></div>
<div class="hl" style="left:1201px;top:155px;width:52px;height:205px;border-color:#ffd41a;border-width:4.5px;border-radius:12px"></div>
</body></html>
